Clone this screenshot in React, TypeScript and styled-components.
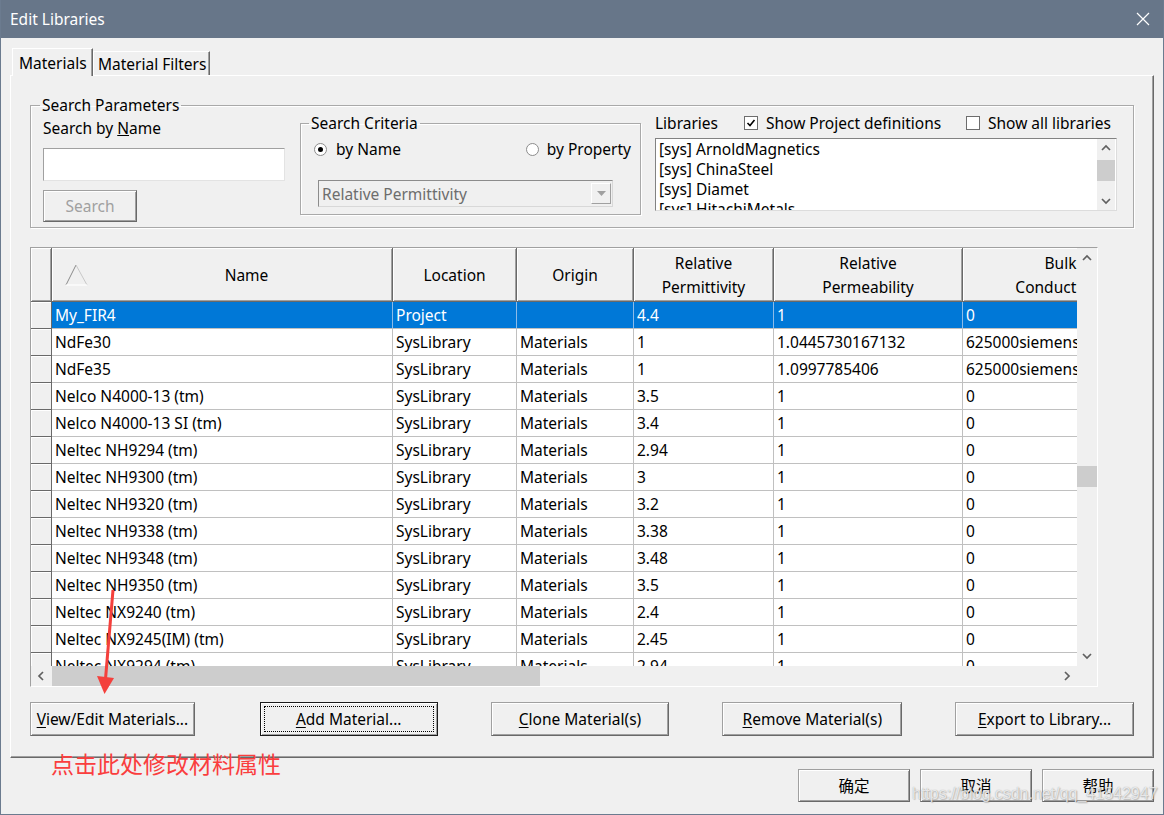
import React from "react";
import styled, { createGlobalStyle } from "styled-components";

const UI_FONT = `"Noto Sans", "Noto Sans CJK SC", sans-serif`;

const GlobalStyle = createGlobalStyle`
  html, body {
    margin: 0;
    padding: 0;
    background: #f0f0f0;
  }
  body {
    font-family: ${UI_FONT};
    font-size: 15px;
    color: #000;
  }
  * {
    box-sizing: border-box;
  }
`;

type Row = [string, string, string, string, string, string];

const rows: Row[] = [
  ["My_FIR4", "Project", "", "4.4", "1", "0"],
  ["NdFe30", "SysLibrary", "Materials", "1", "1.0445730167132", "625000siemens/m"],
  ["NdFe35", "SysLibrary", "Materials", "1", "1.0997785406", "625000siemens/m"],
  ["Nelco N4000-13 (tm)", "SysLibrary", "Materials", "3.5", "1", "0"],
  ["Nelco N4000-13 SI (tm)", "SysLibrary", "Materials", "3.4", "1", "0"],
  ["Neltec NH9294 (tm)", "SysLibrary", "Materials", "2.94", "1", "0"],
  ["Neltec NH9300 (tm)", "SysLibrary", "Materials", "3", "1", "0"],
  ["Neltec NH9320 (tm)", "SysLibrary", "Materials", "3.2", "1", "0"],
  ["Neltec NH9338 (tm)", "SysLibrary", "Materials", "3.38", "1", "0"],
  ["Neltec NH9348 (tm)", "SysLibrary", "Materials", "3.48", "1", "0"],
  ["Neltec NH9350 (tm)", "SysLibrary", "Materials", "3.5", "1", "0"],
  ["Neltec NX9240 (tm)", "SysLibrary", "Materials", "2.4", "1", "0"],
  ["Neltec NX9245(IM) (tm)", "SysLibrary", "Materials", "2.45", "1", "0"],
  ["Neltec NX9294 (tm)", "SysLibrary", "Materials", "2.94", "1", "0"],
];

const libraries = ["[sys] ArnoldMagnetics", "[sys] ChinaSteel", "[sys] Diamet", "[sys] HitachiMetals"];

const COLS = "21px 341px 124px 117px 140px 189px 196px";

/* ---------- window chrome ---------- */

const Window = styled.div`
  position: relative;
  width: 1164px;
  height: 815px;
  display: flex;
  flex-direction: column;
  background: #f0f0f0;
  border: 1px solid #6b7b8f;
  border-top: none;
  overflow: hidden;
`;

const TitleBar = styled.div`
  flex: none;
  height: 38px;
  margin: 0 -1px;
  padding: 0 14px 0 10px;
  display: flex;
  align-items: center;
  justify-content: space-between;
  background: #677689;
  color: #fff;
  font-size: 15.5px;
`;

const Body = styled.div`
  flex: 1;
  display: flex;
  flex-direction: column;
  padding: 10px 9px 0 9px;
`;

const TabStrip = styled.div`
  display: flex;
  align-items: flex-end;
  height: 27px;
  padding-left: 2px;
`;

const Tab = styled.div<{ $active?: boolean; $w: number }>`
  position: relative;
  z-index: ${(p) => (p.$active ? 1 : 0)};
  width: ${(p) => p.$w}px;
  height: ${(p) => (p.$active ? 28 : 24)}px;
  margin-bottom: ${(p) => (p.$active ? -1 : 0)}px;
  padding-left: ${(p) => (p.$active ? 6 : 4)}px;
  display: flex;
  align-items: center;
  background: #f0f0f0;
  border: 1px solid;
  border-bottom: none;
  border-color: #fff #696969 #fff #fff;
  box-shadow: inset -1px 0 0 #a0a0a0;
  font-size: 15.5px;
`;

const TabPanel = styled.div`
  flex: none;
  height: 683px;
  padding: 20px 19px 0 19px;
  display: flex;
  flex-direction: column;
  border: 1px solid;
  border-color: #fff #696969 #696969 #fff;
  box-shadow: inset -1px -1px 0 #a0a0a0;
`;

/* ---------- group boxes ---------- */

const GroupBox = styled.fieldset<{ $w: number }>`
  margin: 0;
  min-width: 0;
  width: ${(p) => p.$w}px;
  border: 1px solid #a9a9a9;
  box-shadow: 1px 1px 0 #fff, inset 1px 1px 0 #fff;
`;

const SearchGroup = styled(GroupBox)`
  padding: 0 15px 5px 12px;
`;

const CriteriaGroup = styled(GroupBox)`
  flex: none;
  padding: 0 9px 7px 13px;
`;

const Legend = styled.legend<{ $shift: number }>`
  padding: 0 2px;
  margin-left: ${(p) => p.$shift}px;
  line-height: 18px;
  font-size: 15.5px;
`;

const SearchRow = styled.div`
  display: flex;
  align-items: flex-start;
`;

const NameColumn = styled.div`
  flex: none;
  width: 242px;
  margin-right: 15px;
  display: flex;
  flex-direction: column;
  align-items: flex-start;
`;

const FieldLabel = styled.div`
  margin-top: 5px;
  line-height: 18px;
  font-size: 15.5px;
`;

const TextInput = styled.div`
  width: 242px;
  height: 33px;
  margin-top: 11px;
  background: #fff;
  border: 1px solid;
  border-color: #a0a0a0 #e3e3e3 #e3e3e3 #a0a0a0;
`;

const RaisedButton = styled.div<{ $w: number; $h: number; $disabled?: boolean; $default?: boolean }>`
  position: relative;
  width: ${(p) => p.$w}px;
  height: ${(p) => p.$h}px;
  display: flex;
  align-items: center;
  justify-content: center;
  background: #f0f0f0;
  color: ${(p) => (p.$disabled ? "#a0a0a0" : "#000")};
  font-size: 15.5px;
  border: 1px solid;
  border-color: ${(p) => (p.$default ? "#1a1a1a" : "#a0a0a0 #696969 #696969 #a0a0a0")};
  box-shadow: inset 1px 1px 0 #fff, inset -1px -1px 0 #a0a0a0;
  &::after {
    content: "";
    display: ${(p) => (p.$default ? "block" : "none")};
    position: absolute;
    inset: 3px;
    border: 1px dotted #000;
  }
  u {
    text-decoration: underline;
    text-underline-offset: 2px;
  }
`;

const SearchButton = styled(RaisedButton)`
  margin-top: 9px;
`;

const RadioRow = styled.div`
  margin-top: 8px;
  height: 18px;
  display: flex;
  align-items: center;
  justify-content: space-between;
`;

const Option = styled.div<{ $gap: number; $w?: number }>`
  display: flex;
  align-items: center;
  gap: ${(p) => p.$gap}px;
  width: ${(p) => (p.$w ? `${p.$w}px` : "auto")};
  line-height: 18px;
  font-size: 15.5px;
  white-space: nowrap;
`;

const Radio = styled.span<{ $checked?: boolean }>`
  flex: none;
  width: 13px;
  height: 13px;
  border-radius: 50%;
  background: #fff;
  border: 1px solid #8c8c8c;
  display: flex;
  align-items: center;
  justify-content: center;
  &::before {
    content: "";
    width: 5px;
    height: 5px;
    border-radius: 50%;
    background: ${(p) => (p.$checked ? "#000" : "transparent")};
  }
`;

const ComboBox = styled.div`
  width: 295px;
  height: 27px;
  margin: 22px 0 0 4px;
  display: flex;
  align-items: center;
  background: #f0f0f0;
  border: 1px solid;
  border-color: #8c8c8c #d8d8d8 #d8d8d8 #8c8c8c;
`;

const ComboText = styled.span`
  flex: 1;
  padding-left: 3px;
  color: #6d6d6d;
  font-size: 15.5px;
`;

const ComboArrow = styled.span`
  width: 20px;
  height: 21px;
  margin-right: 1px;
  display: flex;
  align-items: center;
  justify-content: center;
  border: 1px solid;
  border-color: #fff #a0a0a0 #a0a0a0 #fff;
`;

const LibraryColumn = styled.div`
  flex: none;
  width: 462px;
  margin-left: 14px;
  display: flex;
  flex-direction: column;
`;

const LibHeader = styled.div`
  height: 18px;
  display: flex;
  align-items: center;
`;

const LibLabel = styled.span`
  width: 89px;
  font-size: 15.5px;
`;

const CheckBox = styled.span`
  flex: none;
  width: 14px;
  height: 14px;
  background: #fff;
  border: 1px solid #6d6d6d;
  display: flex;
  align-items: center;
  justify-content: center;
`;

const ListBox = styled.div`
  height: 73px;
  margin-top: 6px;
  display: flex;
  background: #fff;
  border: 1px solid;
  border-color: #828282 #dcdcdc #dcdcdc #828282;
`;

const ListItems = styled.div`
  flex: 1;
  padding-left: 3px;
  overflow: hidden;
  line-height: 20px;
  font-size: 15.5px;
  white-space: nowrap;
`;

const ListScroll = styled.div`
  width: 18px;
  margin-right: 1px;
  display: flex;
  flex-direction: column;
  background: #f0f0f0;
`;

/* ---------- material grid ---------- */

const GridFrame = styled.div`
  flex: none;
  width: 1068px;
  height: 440px;
  margin-top: 19px;
  display: grid;
  grid-template-columns: 1fr 20px;
  grid-template-rows: 1fr 20px;
  background: #f0f0f0;
  border: 1px solid;
  border-color: #a0a0a0 #fff #fff #a0a0a0;
`;

const Viewport = styled.div`
  overflow: hidden;
  background: #f0f0f0;
`;

const GridRow = styled.div<{ $h: number }>`
  display: grid;
  grid-template-columns: ${COLS};
  height: ${(p) => p.$h}px;
  width: max-content;
`;

const HeaderCell = styled.div`
  display: flex;
  align-items: center;
  justify-content: center;
  text-align: center;
  line-height: 24px;
  font-size: 15.5px;
  background: #f0f0f0;
  border-right: 1px solid #696969;
  border-bottom: 1px solid #696969;
  box-shadow: inset 1px 1px 0 #fff, inset -1px -1px 0 #a0a0a0;
  white-space: nowrap;
  overflow: hidden;
`;

const NameHeader = styled(HeaderCell)`
  justify-content: flex-start;
  padding-left: 13px;
  span {
    flex: 1;
    padding-left: 12px;
  }
`;

const RowHeader = styled.div`
  background: #f0f0f0;
  border-right: 1px solid #696969;
  border-bottom: 1px solid #696969;
  box-shadow: inset 1px 1px 0 #fff;
`;

const DataCell = styled.div<{ $selected?: boolean }>`
  padding-left: 3px;
  line-height: 26px;
  font-size: 15.5px;
  white-space: nowrap;
  overflow: hidden;
  background: ${(p) => (p.$selected ? "#0078d7" : "#fff")};
  color: ${(p) => (p.$selected ? "#fff" : "#000")};
  border-right: 1px solid ${(p) => (p.$selected ? "#8dbbe8" : "#c0c0c0")};
  border-bottom: 1px solid #c0c0c0;
`;

const VScroll = styled.div`
  display: flex;
  flex-direction: column;
  background: #f0f0f0;
`;

const HScroll = styled.div`
  display: flex;
  background: #f0f0f0;
`;

const ScrollArrow = styled.div<{ $size: number }>`
  flex: none;
  width: ${(p) => p.$size}px;
  height: ${(p) => p.$size}px;
  display: flex;
  align-items: center;
  justify-content: center;
`;

const VTrack = styled.div`
  flex: 1;
  display: flex;
  flex-direction: column;
`;

const HTrack = styled.div`
  flex: 1;
  display: flex;
`;

const Thumb = styled.div<{ $offset: number; $len: number; $vertical?: boolean }>`
  flex: none;
  background: #cdcdcd;
  ${(p) =>
    p.$vertical
      ? `margin-top: ${p.$offset}px; height: ${p.$len}px; width: 100%;`
      : `margin-left: ${p.$offset}px; width: ${p.$len}px; height: 100%;`}
`;

/* ---------- buttons ---------- */

const ActionBar = styled.div`
  display: flex;
  gap: 53px;
  margin-top: 15px;
`;

const ActionButton = styled(RaisedButton)<{ $extra?: number }>`
  margin-right: ${(p) => p.$extra ?? 0}px;
`;

const Footer = styled.div`
  display: flex;
  justify-content: flex-end;
  gap: 10px;
  margin-top: 11px;
`;

/* ---------- screenshot annotations ---------- */

const Annotation = styled.div`
  position: absolute;
  left: 50px;
  top: 750px;
  font-family: "Noto Sans CJK SC", sans-serif;
  font-size: 23px;
  line-height: 26px;
  color: #fa3e3e;
`;

const ArrowOverlay = styled.svg`
  position: absolute;
  left: 90px;
  top: 585px;
`;

const Watermark = styled.div`
  position: absolute;
  left: 911px;
  top: 785px;
  font-family: "Liberation Sans", Arial, sans-serif;
  font-size: 16px;
  color: rgba(255, 255, 255, 0.75);
  text-shadow: 0 0 1px rgba(90, 90, 90, 0.55), 1px 1px 1px rgba(120, 120, 120, 0.35);
  white-space: nowrap;
`;

/* ---------- small drawings ---------- */

type Dir = "up" | "down" | "left" | "right";

const Chevron = ({ dir }: { dir: Dir }) => {
  const vertical = dir === "up" || dir === "down";
  const pts = {
    up: "1,6 5,2 9,6",
    down: "1,2 5,6 9,2",
    left: "6,1 2,5 6,9",
    right: "2,1 6,5 2,9",
  }[dir];
  return (
    <svg width={vertical ? 10 : 8} height={vertical ? 8 : 10} viewBox={vertical ? "0 0 10 8" : "0 0 8 10"}>
      <polyline points={pts} fill="none" stroke="#606060" strokeWidth="1.7" />
    </svg>
  );
};

const SortTriangle = () => (
  <svg width="24" height="22" viewBox="0 0 24 22">
    <line x1="1" y1="21" x2="11" y2="1" stroke="#8a8a8a" strokeWidth="1" />
    <line x1="11" y1="1" x2="22" y2="21" stroke="#c8c8c8" strokeWidth="1" />
    <line x1="1" y1="21" x2="22" y2="21" stroke="#fff" strokeWidth="1.2" />
  </svg>
);

const CheckMark = () => (
  <svg width="10" height="10" viewBox="0 0 10 10">
    <polyline points="1.5,5 4,7.5 8.5,2" fill="none" stroke="#000" strokeWidth="1.6" />
  </svg>
);

const CloseIcon = () => (
  <svg width="14" height="14" viewBox="0 0 14 14">
    <path d="M1 1 L13 13 M13 1 L1 13" stroke="#fff" strokeWidth="1.2" />
  </svg>
);

const ComboTriangle = () => (
  <svg width="9" height="5" viewBox="0 0 9 5">
    <polygon points="0,0 9,0 4.5,5" fill="#a0a0a0" />
  </svg>
);

/* ---------- app ---------- */

export default function App() {
  return (
    <>
      <GlobalStyle />
      <Window>
        <TitleBar>
          <span>Edit Libraries</span>
          <CloseIcon />
        </TitleBar>

        <Body>
          <TabStrip>
            <Tab $active $w={81}>Materials</Tab>
            <Tab $w={117}>Material Filters</Tab>
          </TabStrip>

          <TabPanel>
            <SearchGroup $w={1104}>
              <Legend $shift={-3}>Search Parameters</Legend>
              <SearchRow>
                <NameColumn>
                  <FieldLabel>
                    Search by <u>N</u>ame
                  </FieldLabel>
                  <TextInput />
                  <SearchButton $w={94} $h={32} $disabled>
                    Search
                  </SearchButton>
                </NameColumn>

                <CriteriaGroup $w={341}>
                  <Legend $shift={-5}>Search Criteria</Legend>
                  <RadioRow>
                    <Option $gap={9}>
                      <Radio $checked />
                      by Name
                    </Option>
                    <Option $gap={8}>
                      <Radio />
                      by Property
                    </Option>
                  </RadioRow>
                  <ComboBox>
                    <ComboText>Relative Permittivity</ComboText>
                    <ComboArrow>
                      <ComboTriangle />
                    </ComboArrow>
                  </ComboBox>
                </CriteriaGroup>

                <LibraryColumn>
                  <LibHeader>
                    <LibLabel>Libraries</LibLabel>
                    <Option $gap={8} $w={222}>
                      <CheckBox>
                        <CheckMark />
                      </CheckBox>
                      Show Project definitions
                    </Option>
                    <Option $gap={8}>
                      <CheckBox />
                      Show all libraries
                    </Option>
                  </LibHeader>
                  <ListBox>
                    <ListItems>
                      {libraries.map((lib) => (
                        <div key={lib}>{lib}</div>
                      ))}
                    </ListItems>
                    <ListScroll>
                      <ScrollArrow $size={18}>
                        <Chevron dir="up" />
                      </ScrollArrow>
                      <VTrack>
                        <Thumb $vertical $offset={3} $len={21} />
                      </VTrack>
                      <ScrollArrow $size={18}>
                        <Chevron dir="down" />
                      </ScrollArrow>
                    </ListScroll>
                  </ListBox>
                </LibraryColumn>
              </SearchRow>
            </SearchGroup>

            <GridFrame>
              <Viewport>
                <GridRow $h={54}>
                  <HeaderCell />
                  <NameHeader>
                    <SortTriangle />
                    <span>Name</span>
                  </NameHeader>
                  <HeaderCell>Location</HeaderCell>
                  <HeaderCell>Origin</HeaderCell>
                  <HeaderCell>
                    Relative
                    <br />
                    Permittivity
                  </HeaderCell>
                  <HeaderCell>
                    Relative
                    <br />
                    Permeability
                  </HeaderCell>
                  <HeaderCell>
                    Bulk
                    <br />
                    Conductivity
                  </HeaderCell>
                </GridRow>
                {rows.map((row, i) => (
                  <GridRow $h={27} key={row[0]}>
                    <RowHeader />
                    {row.map((value, c) => (
                      <DataCell key={c} $selected={i === 0}>
                        {value}
                      </DataCell>
                    ))}
                  </GridRow>
                ))}
              </Viewport>
              <VScroll>
                <ScrollArrow $size={20}>
                  <Chevron dir="up" />
                </ScrollArrow>
                <VTrack>
                  <Thumb $vertical $offset={198} $len={21} />
                </VTrack>
                <ScrollArrow $size={20}>
                  <Chevron dir="down" />
                </ScrollArrow>
              </VScroll>
              <HScroll>
                <ScrollArrow $size={20}>
                  <Chevron dir="left" />
                </ScrollArrow>
                <HTrack>
                  <Thumb $offset={1} $len={488} />
                </HTrack>
                <ScrollArrow $size={20}>
                  <Chevron dir="right" />
                </ScrollArrow>
              </HScroll>
              <div />
            </GridFrame>

            <ActionBar>
              <ActionButton $w={165} $h={34} $extra={12}>
                <span>
                  <u>V</u>iew/Edit Materials...
                </span>
              </ActionButton>
              <ActionButton $w={178} $h={34} $default>
                <span>
                  <u>A</u>dd Material...
                </span>
              </ActionButton>
              <ActionButton $w={179} $h={34}>
                <span>
                  <u>C</u>lone Material(s)
                </span>
              </ActionButton>
              <ActionButton $w={180} $h={34}>
                <span>
                  <u>R</u>emove Material(s)
                </span>
              </ActionButton>
              <ActionButton $w={179} $h={34}>
                <span>
                  <u>E</u>xport to Library...
                </span>
              </ActionButton>
            </ActionBar>
          </TabPanel>

          <Footer>
            <RaisedButton $w={112} $h={33}>确定</RaisedButton>
            <RaisedButton $w={112} $h={33}>取消</RaisedButton>
            <RaisedButton $w={112} $h={33}>帮助</RaisedButton>
          </Footer>
        </Body>

        <ArrowOverlay width="32" height="112" viewBox="0 0 32 112">
          <line x1="22" y1="5" x2="14.5" y2="94" stroke="#f4403c" strokeWidth="3" />
          <polygon points="6,91 23,93 13.5,109" fill="#f4403c" />
        </ArrowOverlay>
        <Annotation>点击此处修改材料属性</Annotation>
        <Watermark>https://blog.csdn.net/qq_41542947</Watermark>
      </Window>
    </>
  );
}
